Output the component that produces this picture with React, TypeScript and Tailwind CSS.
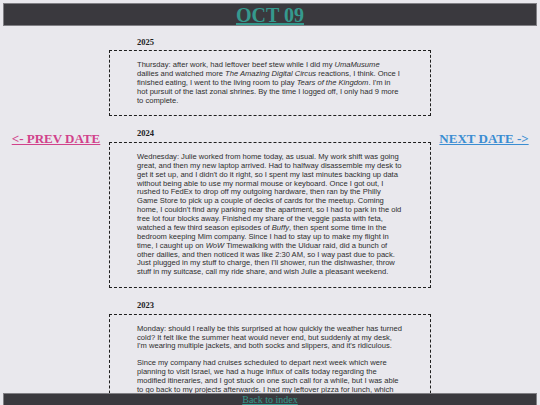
import React from "react";

const serif = { fontFamily: '"Liberation Serif", "Times New Roman", serif' };
const sans = { fontFamily: '"Liberation Sans", Arial, sans-serif' };

function Entry({ year, children }: { year: string; children: React.ReactNode }) {
  return (
    <section className="mb-[12.5px]">
      <h4 className="ml-[28px] mb-[3.5px] text-[8.5px] leading-[10px] font-bold text-[#222]" style={serif}>
        {year}
      </h4>
      <div
        className="border border-dashed border-[#1e1e1e] px-[27px] pt-[10px] pb-[9.5px] text-[7.59px] leading-[8.87px] text-[#2e2e2e]"
        style={sans}
      >
        {children}
      </div>
    </section>
  );
}

export default function App() {
  return (
    <div className="min-h-[405px] bg-[#e9e8ed] px-[3px] pt-[3px]">
      <header className="h-[23px] border border-[#807f84] bg-[#3a393e] flex items-center justify-center">
        <a href="#" className="text-[20px] leading-[20px] font-bold text-[#35998e] underline" style={serif}>
          OCT 09
        </a>
      </header>

      <div className="flex pt-[10.5px]">
        <div className="w-[106px] pt-[94px] flex justify-center">
          <a href="#" className="text-[13px] leading-[15px] font-bold text-[#d1428b] underline" style={serif}>
            &lt;- PREV DATE
          </a>
        </div>

        <main className="w-[322px]">
          <Entry year="2025">
            <p>
              Thursday: after work, had leftover beef stew while I did my <i>UmaMusume</i> dailies and watched more{" "}
              <i>The Amazing Digital Circus</i> reactions, I think. Once I finished eating, I went to the living room
              to play <i>Tears of the Kingdom</i>. I'm in hot pursuit of the last zonai shrines. By the time I logged
              off, I only had 9 more to complete.
            </p>
          </Entry>
          <Entry year="2024">
            <p>
              Wednesday: Julie worked from home today, as usual. My work shift was going great, and then my new laptop
              arrived. Had to halfway disassemble my desk to get it set up, and I didn't do it right, so I spent my
              last minutes backing up data without being able to use my normal mouse or keyboard. Once I got out, I
              rushed to FedEx to drop off my outgoing hardware, then ran by the Philly Game Store to pick up a couple
              of decks of cards for the meetup. Coming home, I couldn't find any parking near the apartment, so I had
              to park in the old free lot four blocks away. Finished my share of the veggie pasta with feta, watched a
              few third season episodes of <i>Buffy</i>, then spent some time in the bedroom keeping Mim company.
              Since I had to stay up to make my flight in time, I caught up on <i>WoW</i> Timewalking with the Ulduar
              raid, did a bunch of other dailies, and then noticed it was like 2:30 AM, so I way past due to pack.
              Just plugged in my stuff to charge, then I'll shower, run the dishwasher, throw stuff in my suitcase,
              call my ride share, and wish Julie a pleasant weekend.
            </p>
          </Entry>
          <Entry year="2023">
            <p>
              Monday: should I really be this surprised at how quickly the weather has turned cold? It felt like the
              summer heat would never end, but suddenly at my desk, I'm wearing multiple jackets, and both socks and
              slippers, and it's ridiculous.
            </p>
            <p className="mt-[8px]">
              Since my company had cruises scheduled to depart next week which were planning to visit Israel, we had a
              huge influx of calls today regarding the modified itineraries, and I got stuck on one such call for a
              while, but I was able to go back to my projects afterwards. I had my leftover pizza for lunch, which
              held up nicely, and spent the rest of the afternoon clearing out my inbox.
            </p>
          </Entry>
        </main>

        <div className="w-[106px] pt-[94px] flex justify-center">
          <a href="#" className="text-[13px] leading-[15px] font-bold text-[#3b8dd2] underline" style={serif}>
            NEXT DATE -&gt;
          </a>
        </div>
      </div>

      <footer className="fixed left-[3px] right-[3px] top-[393px] h-[20px] border border-[#807f84] bg-[#3a393e] flex justify-center">
        <a href="#" className="text-[10px] leading-[11px] text-[#35998e] underline" style={serif}>
          Back to index
        </a>
      </footer>
    </div>
  );
}
